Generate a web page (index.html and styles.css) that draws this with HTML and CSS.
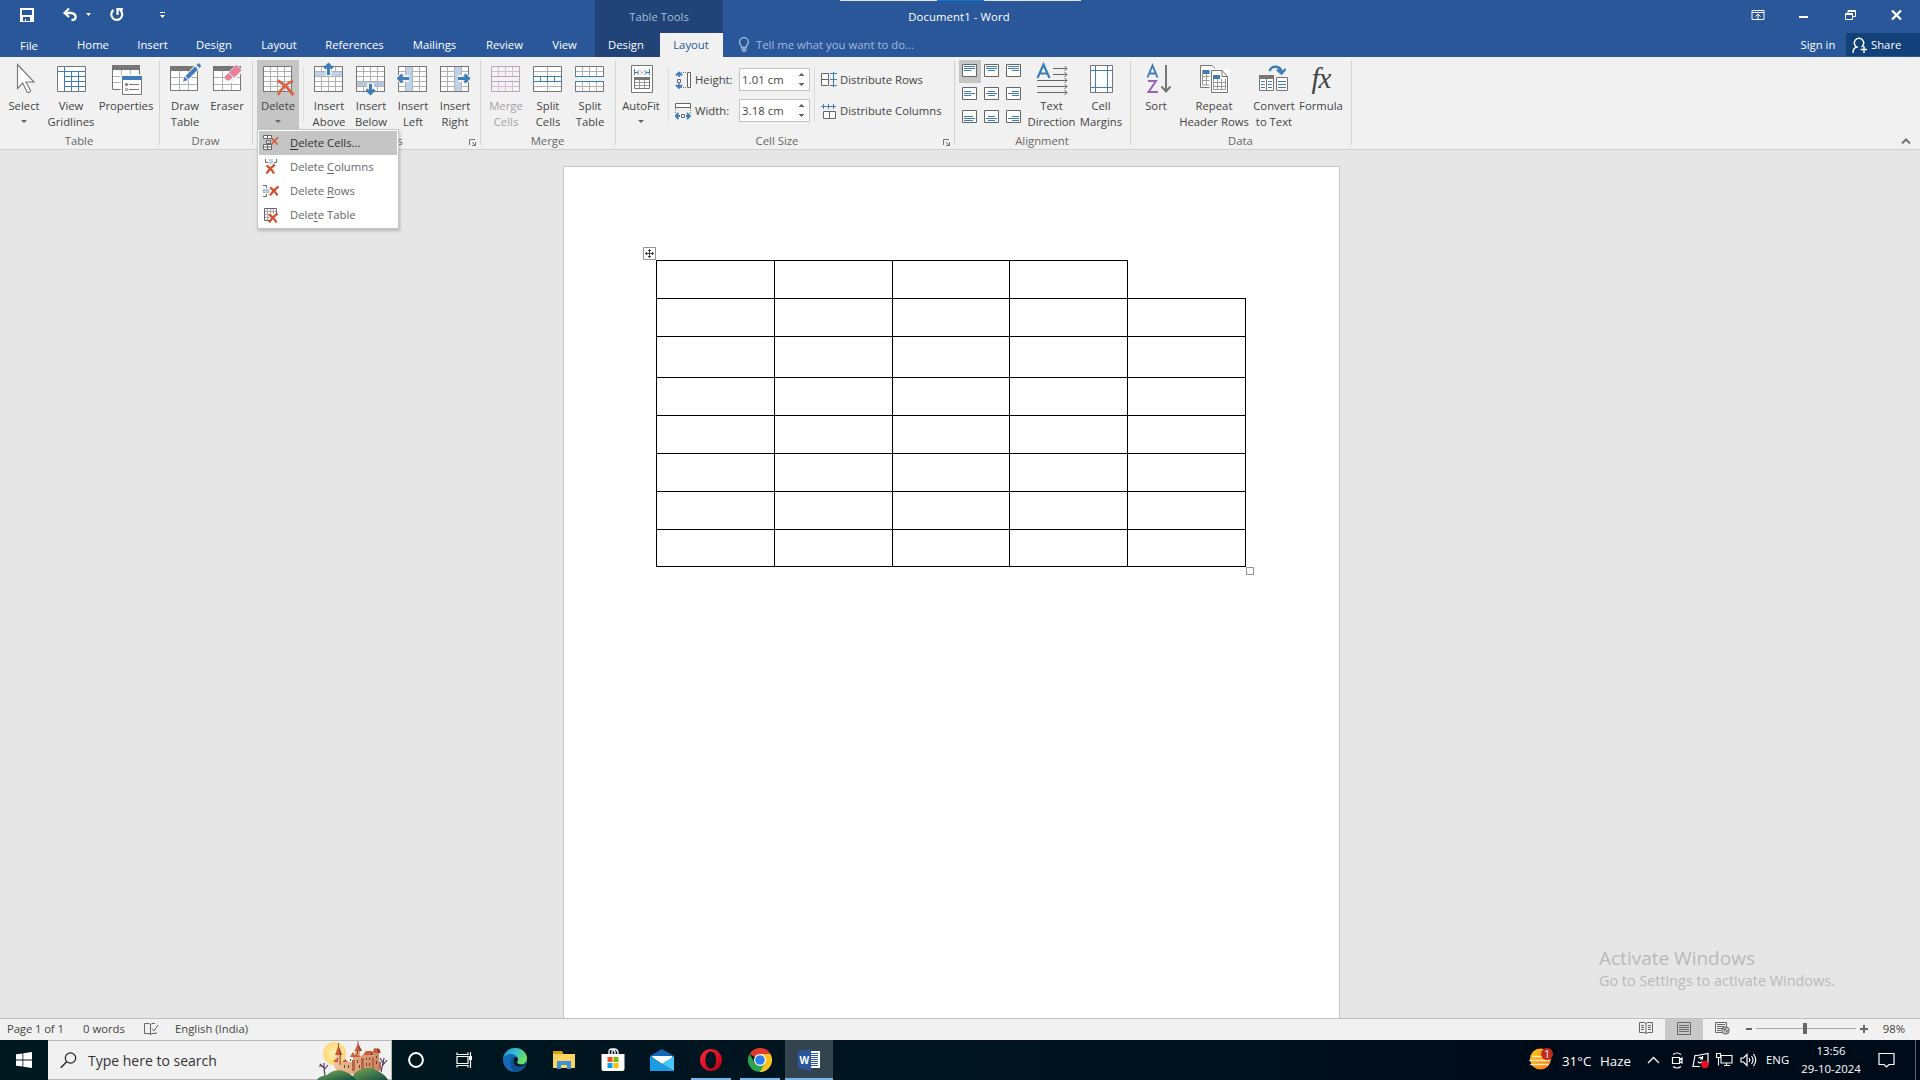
FILE: index.html
```html
<!DOCTYPE html>
<html lang="en">
<head>
<meta charset="utf-8">
<title>Document1 - Word</title>
<link rel="stylesheet" href="styles.css">
</head>
<body>
<svg class="defs" width="0" height="0">
  <defs>
    <g id="grid"><path fill="#fff" stroke="#767676" d="M1.5 4.5h28v25h-28z"/><path fill="none" stroke="#b1b1b1" d="M2 9.500h27M2 14.500h27M2 19.500h27M2 24.500h27M8.500 5v24M15.500 5v24M22.500 5v24"/></g>
    <g id="gridframe"><path fill="none" stroke="#767676" d="M1.500 4.500h28v25h-28z"/></g>
    <g id="head"><path fill="#fff" stroke="#767676" d="M1.500 4.500h27v24h-27z"/><path fill="none" stroke="#b1b1b1" d="M2 15.500h26M2 22.500h26M10.500 9v19M19.500 9v19"/><path fill="#767676" d="M1 4h28v5H1z"/></g>
    <g id="cross"><path fill="none" stroke="#d35230" stroke-width="2.200" d="M.5 1.500Q5 4 8 9.500M9 .5Q4 4 .5 9.500"/></g>
  </defs>
</svg>
<div class="app">
  <header class="titlebar">
    <div class="edge-strip"><i></i><b></b><i></i></div>
    <div class="quick">
      <svg width="180" height="33" viewBox="0 0 180 33"><path fill="#fff" fill-rule="evenodd" d="M20 8h14v14H20zM22 10v5h10v-5zM23 17v4h2v-2h1v2h4v-4z"/><path fill="none" stroke="#fff" stroke-width="2.300" d="M65 13h6.500c5.500 1 5.500 7 0 7"/><path fill="none" stroke="#fff" stroke-width="2.200" d="M69 8.500L64.500 13l4.500 4"/><path fill="#fff" d="M86 13h5l-2.500 3zM160 12h5v1h-5zM160 15h5l-2.500 3z"/><path fill="none" stroke="#fff" stroke-width="2.200" d="M113.500 10a5.500 5.500 0 1 0 6.500 0M117.500 15V9.200h5.500"/></svg>
    </div>
    <div class="context-title">Table Tools</div>
    <div class="doc-title">Document1 - Word</div>
    <div class="window-buttons">
      <span><svg width="14" height="12" viewBox="0 0 14 12"><path fill="none" stroke="#fff" d="M1 1.500h12v9H1zM1 3.500h12M7 10V5M4.500 7.500L7 5l2.500 2.500"/></svg></span>
      <span><svg width="10" height="12" viewBox="0 0 10 12"><path fill="#fff" d="M0 7h9v2H0z"/></svg></span>
      <span><svg width="11" height="12" viewBox="0 0 11 12"><path fill="none" stroke="#fff" d="M.5 4.500h7v6h-7zM.5 5.500h7M3 4V1.500h7.500v6H8M3 2.500h7"/></svg></span>
      <span><svg width="11" height="12" viewBox="0 0 11 12"><path fill="none" stroke="#fff" stroke-width="2.300" d="M1 1.500l9 9M10 1.500l-9 9"/></svg></span>
    </div>
  </header>
  <nav class="tabs">
    <span class="t-file">File</span><span class="t-home">Home</span><span class="t-insert">Insert</span><span class="t-design">Design</span><span class="t-layout">Layout</span><span class="t-ref">References</span><span class="t-mail">Mailings</span><span class="t-review">Review</span><span class="t-view">View</span><span class="t-ctx">Design</span><span class="t-active">Layout</span>
    <div class="tell"><svg width="12" height="16" viewBox="0 0 12 16"><path fill="none" stroke="#a3b9dc" stroke-width="1.400" d="M3.700 10.500C3.700 8.500 1.500 7.500 1.500 5a4.300 4.300 0 0 1 8.800 0c0 2.500-2.200 3.500-2.200 5.500z"/><path fill="#a3b9dc" d="M3.500 11.500h5v2h-5zM4.500 14h3v1h-3z"/></svg>Tell me what you want to do...</div>
    <span class="signin">Sign in</span>
    <div class="share"><svg width="16" height="18" viewBox="0 0 16 18"><path fill="none" stroke="#fff" stroke-width="1.400" d="M4.500 11a4.700 4.700 0 1 1 5 0M1 17c0-4 2-6 5-6M12 10v7M8.500 13.500H15"/></svg>Share</div>
  </nav>

  <section class="ribbon">
    <div class="group g-table">
      <div class="tools">
        <div class="btn w44"><svg width="32" height="36" viewBox="0 0 32 36"><path fill="#fff" stroke="#767676" stroke-width="1.100" d="M9.500 2.500v24l5.200-5.500 4.300 9c1.500 1.300 4-.2 3.500-1.500L18 20h8z"/></svg><span>Select</span><i class="caret"></i></div>
        <div class="btn w50"><svg width="32" height="36" viewBox="0 0 32 36"><path fill="#fff" d="M2 4h29v26H2z"/><path fill="none" stroke="#3f7db8" d="M9.500 5v24M3 9.500h27M16.500 10v19M23.500 10v19M10 14.500h20M10 19.500h20M10 24.500h20"/><path fill="none" stroke="#767676" d="M2.500 4.500h28v25h-28z"/></svg><span>View<br>Gridlines</span></div>
        <div class="btn w60"><svg width="32" height="36" viewBox="0 0 32 36"><path fill="#fff" stroke="#767676" d="M2.500 4.500h27v23h-27z"/><path fill="none" stroke="#b1b1b1" d="M3 14.500h26M3 20.500h10M11.500 8v6M20.500 8v6"/><path fill="#767676" d="M2 3h28v5H2z"/><path fill="#fff" stroke="#f1f1f1" d="M11 13h21v21H11z"/><path fill="#fff" stroke="#767676" d="M12.500 14.500h19v18h-19z"/><path fill="#3f7db8" d="M12 14h20v4H12z"/><path fill="none" stroke="#767676" d="M19 22.500h10M19 27.500h10"/><circle cx="16.500" cy="22.500" r="1.500" fill="#767676"/><circle cx="16.500" cy="27.500" r="1.100" fill="none" stroke="#767676"/></svg><span>Properties</span></div>
      </div>
      <div class="cap">Table</div>
    </div>
    <i class="vsep"></i>
    <div class="group g-draw">
      <div class="tools">
        <div class="btn w42"><svg width="32" height="36" viewBox="0 0 32 36"><use href="#head"/><path stroke="#f1f1f1" stroke-width="6" d="M16 18L30 3"/><path stroke="#3f7db8" stroke-width="4" d="M18 15.500L27.500 6M29 4.500l2-2"/><path fill="#3f7db8" d="M14 19.500l1.500-5 3.500 3.500z"/></svg><span>Draw<br>Table</span></div>
        <div class="btn w42"><svg width="32" height="36" viewBox="0 0 32 36"><use href="#head" x="1"/><path stroke="#f1f1f1" stroke-width="10" d="M17 17.500L29 5.500"/><path stroke="#e8829a" stroke-width="7.500" d="M20.500 13L28 5.500"/><path fill="#e8829a" d="M14 14l4-3 4 4-4 3.500h-2l-2-2z"/><path stroke="#fff" d="M17.500 10.500l5 5"/></svg><span>Eraser</span></div>
      </div>
      <div class="cap">Draw</div>
    </div>
    <i class="vsep"></i>
    <div class="group g-rows">
      <div class="tools">
        <div class="btn w42 pressed"><svg width="34" height="36" viewBox="0 0 34 36"><use href="#grid" x="1"/><path fill="none" stroke="#dc6140" stroke-width="3" d="M16.500 18.500Q25 23 32.500 33"/><path fill="none" stroke="#dc6140" stroke-width="2.600" d="M32 19Q22 23 17 33"/></svg><span>Delete</span><i class="caret"></i></div>
        <i class="tsep s1"></i>
        <div class="btn w42"><svg width="32" height="36" viewBox="0 0 32 36"><use href="#grid"/><path fill="#bdd2e8" d="M2 10h27v4H2z"/><use href="#gridframe"/><path stroke="#f1f1f1" stroke-width="6" d="M15.500 14V2"/><path fill="none" stroke="#3f7db8" stroke-width="3" d="M15.500 13V3M11.500 6.500l4-4 4 4"/></svg><span>Insert<br>Above</span></div>
        <div class="btn w42"><svg width="32" height="36" viewBox="0 0 32 36"><use href="#grid"/><path fill="#b7c7d8" d="M2 20h27v4H2z"/><use href="#gridframe"/><path stroke="#f1f1f1" stroke-width="7" d="M15.500 21v13"/><path fill="none" stroke="#3f7db8" stroke-width="3" d="M15.500 22v10M11.500 27.500l4 4 4-4"/></svg><span>Insert<br>Below</span></div>
        <div class="btn w42"><svg width="32" height="36" viewBox="0 0 32 36"><use href="#grid"/><path fill="#bdd2e8" d="M9 5h6v24H9z"/><use href="#gridframe"/><path stroke="#f1f1f1" stroke-width="7" d="M0 16.500h12"/><path fill="none" stroke="#3f7db8" stroke-width="3" d="M2 16.500h10M5.500 12.500l-4 4 4 4"/></svg><span>Insert<br>Left</span></div>
        <div class="btn w42"><svg width="32" height="36" viewBox="0 0 32 36"><use href="#grid"/><path fill="#bdd2e8" d="M16 5h6v24h-6z"/><use href="#gridframe"/><path stroke="#f1f1f1" stroke-width="7" d="M19 16.500h13"/><path fill="none" stroke="#3f7db8" stroke-width="3" d="M19 16.500h10M25.500 12.500l4 4-4 4"/></svg><span>Insert<br>Right</span></div>
      </div>
      <div class="cap">Rows &amp; Columns</div>
      <svg class="launch" width="8" height="8" viewBox="0 0 8 8"><path fill="none" stroke="#767676" d="M.5 6V.5H6M3 3l3.500 3.500M6.500 3v3.500H3"/></svg>
      <div class="menu">
        <div class="item on"><svg width="18" height="18" viewBox="0 0 18 18"><path fill="#fff" stroke="#666" d="M1.500 1.500h8v3h-8zM5.500 1.500v3M1.500 10.500h8v5h-8zM5.500 10.500v5M1.500 13h8"/><path fill="#cfdcf0" stroke="#666" d="M4.500 6.500h4v3h-4z"/><use href="#cross" transform="translate(9 3) scale(.8)" opacity=".9"/></svg><span><u>D</u>elete Cells...</span></div>
        <div class="item"><svg width="18" height="18" viewBox="0 0 18 18"><path fill="#bdd2e8" d="M7 1h4v5H7z"/><path fill="none" stroke="#666" d="M3.500 1v3.500H6M14.500 1v3.500H12"/><use href="#cross" x="4" y="6"/></svg><span>Delete <u>C</u>olumns</span></div>
        <div class="item"><svg width="18" height="18" viewBox="0 0 18 18"><path fill="#bdd2e8" stroke="#8aa" stroke-width=".6" d="M1 7.500h6v3H1z"/><path fill="none" stroke="#666" d="M1 3.500h3.500V6M1 14.500h3.500V12"/><use href="#cross" x="7.500" y="4"/></svg><span>Delete <u>R</u>ows</span></div>
        <div class="item"><svg width="18" height="18" viewBox="0 0 18 18"><path fill="#fff" stroke="#666" d="M2.500 2.500h12v12h-12z"/><path fill="none" stroke="#aaa" d="M3 5.500h11M3 8.500h11M3 11.500h11M5.500 3v11M8.500 3v11M11.500 3v11"/><path fill="#fff" d="M8 8h9v9H8z"/><use href="#cross" x="6.500" y="7"/></svg><span>Dele<u>t</u>e Table</span></div>
      </div>
    </div>
    <i class="vsep"></i>
    <div class="group g-merge">
      <div class="tools">
        <div class="btn w42 off"><svg width="32" height="36" viewBox="0 0 32 36"><path fill="#f7f0f7" stroke="#b1abb1" d="M1.500 4.500h28v25h-28z"/><path fill="none" stroke="#ccc5cc" d="M2 9.500h27M2 24.500h27M8.500 5v9M15.500 5v9M22.500 5v9M8.500 20v9M15.500 20v9M22.500 20v9"/><path stroke="#b1abb1" d="M2 14.500h27M2 19.500h27"/></svg><span>Merge<br>Cells</span></div>
        <div class="btn w42"><svg width="32" height="36" viewBox="0 0 32 36"><path fill="#fff" d="M1 4h29v26H1z"/><path stroke="#b1b1b1" d="M2 9.500h27M2 24.500h27M15.500 5v9M15.500 20v9"/><use href="#gridframe"/><path fill="none" stroke="#3f7db8" d="M1 14.500h29M1 19.500h29M1.500 15v4M8.500 15v4M15.500 15v4M22.500 15v4M29.500 15v4"/></svg><span>Split<br>Cells</span></div>
        <div class="btn w42"><svg width="32" height="36" viewBox="0 0 32 36"><path fill="#fff" stroke="#767676" d="M1.500 14V4.500h28V14M1.500 20v9.500h28V20"/><path stroke="#b1b1b1" d="M2 9.500h27M2 24.500h27M8.500 5v9M15.500 5v9M22.500 5v9M8.500 20v9M15.500 20v9M22.500 20v9"/><path stroke="#3f7db8" d="M1 14.500h29M1 19.500h29"/></svg><span>Split<br>Table</span></div>
      </div>
      <div class="cap">Merge</div>
    </div>
    <i class="vsep"></i>
    <div class="group g-size">
      <div class="tools">
        <div class="btn w42"><svg width="32" height="36" viewBox="0 0 32 36"><path fill="#fff" stroke="#767676" d="M6.500 3.500h21v27h-21z"/><path stroke="#767676" fill="none" d="M9.500 17.500h15v9h-15z"/><path fill="#767676" d="M9 15h16v3H9z"/><path stroke="#999" d="M10 20.500h14M10 23.500h14M14.500 18v8M19.500 18v8"/><path stroke="#3f7db8" fill="none" d="M9.500 7v6M24.500 7v6M10 10.500h3M21 10.500h3M13 8.500v4M21 8.500v4"/><path stroke="#999" stroke-dasharray="2 1" d="M14.500 8l5 5M19.500 8l-5 5"/></svg><span>AutoFit</span><i class="caret"></i></div>
        <i class="tsep s2"></i>
        <div class="fields">
          <div class="field"><svg width="17" height="18" viewBox="0 0 17 18"><path fill="#fff" stroke="#666" d="M12.500 1.500h3v15h-3zM2.500 8.500h3v3h-3z"/><path fill="none" stroke="#777" stroke-dasharray="1 1" d="M6 1.500h6M6 16.500h6"/><path fill="none" stroke="#3f7db8" stroke-width="1.800" d="M4 6V2M1 4.500l3-3 3 3M4 12.500v4M1 14l3 3 3-3"/></svg><label>Height:</label><div class="num">1.01 cm<em></em></div></div>
          <div class="field"><svg width="17" height="18" viewBox="0 0 17 18"><path fill="#fff" stroke="#666" d="M.5 1.500h15v4H.5zM6.500 12.500h3v3h-3z"/><path fill="none" stroke="#777" stroke-dasharray="1 1" d="M.5 6v6M15.500 6v6"/><path fill="none" stroke="#3f7db8" stroke-width="1.800" d="M5 14H1M3.500 11l-3 3 3 3M11 14h4M12 11l3 3-3 3"/></svg><label>Width:</label><div class="num">3.18 cm<em></em></div></div>
        </div>
        <i class="tsep s3"></i>
        <div class="dist">
          <div><svg width="17" height="18" viewBox="0 0 17 18"><path fill="#fff" stroke="#666" d="M.5 2.500h7v12h-7zM.5 8.500h7"/><path fill="none" stroke="#3f7db8" d="M9 2.500h7M9 8.500h7M9 14.500h7M12.500 1v15"/></svg>Distribute Rows</div>
          <div><svg width="17" height="18" viewBox="0 0 17 18"><path fill="#fff" stroke="#666" d="M2.500 9.500h12v7h-12zM8.500 9.500v7"/><path fill="none" stroke="#3f7db8" d="M0 4.500h15M2.500 2v5M7.500 2v5M12.500 2v5"/></svg>Distribute Columns</div>
        </div>
      </div>
      <div class="cap">Cell Size</div>
      <svg class="launch end" width="8" height="8" viewBox="0 0 8 8"><path fill="none" stroke="#767676" d="M.5 6V.5H6M3 3l3.500 3.500M6.500 3v3.500H3"/></svg>
    </div>
    <i class="vsep"></i>
    <div class="group g-align">
      <div class="tools">
        <div class="aligns">
          <span class="sel"><svg width="15" height="13" viewBox="0 0 15 13"><path fill="#fff" stroke="#666" d="M.5.5h14v12H.5z"/><path stroke="#3f7db8" d="M2 2.500h11M2 4.500h11M2 6.500h7"/></svg></span>
          <span><svg width="15" height="13" viewBox="0 0 15 13"><path fill="#fff" stroke="#666" d="M.5.5h14v12H.5z"/><path stroke="#3f7db8" d="M2 2.500h11M2 4.500h11M4 6.500h7"/></svg></span>
          <span><svg width="15" height="13" viewBox="0 0 15 13"><path fill="#fff" stroke="#666" d="M.5.5h14v12H.5z"/><path stroke="#3f7db8" d="M2 2.500h11M2 4.500h11M6 6.500h7"/></svg></span>
          <span><svg width="15" height="13" viewBox="0 0 15 13"><path fill="#fff" stroke="#666" d="M.5.5h14v12H.5z"/><path stroke="#3f7db8" d="M2 4.500h7M2 6.500h11M2 8.500h7"/></svg></span>
          <span><svg width="15" height="13" viewBox="0 0 15 13"><path fill="#fff" stroke="#666" d="M.5.5h14v12H.5z"/><path stroke="#3f7db8" d="M4 4.500h7M2 6.500h11M4 8.500h7"/></svg></span>
          <span><svg width="15" height="13" viewBox="0 0 15 13"><path fill="#fff" stroke="#666" d="M.5.5h14v12H.5z"/><path stroke="#3f7db8" d="M6 4.500h7M2 6.500h11M6 8.500h7"/></svg></span>
          <span><svg width="15" height="13" viewBox="0 0 15 13"><path fill="#fff" stroke="#666" d="M.5.5h14v12H.5z"/><path stroke="#3f7db8" d="M2 6.500h9M2 8.500h11M2 10.500h9"/></svg></span>
          <span><svg width="15" height="13" viewBox="0 0 15 13"><path fill="#fff" stroke="#666" d="M.5.5h14v12H.5z"/><path stroke="#3f7db8" d="M4 6.500h7M2 8.500h11M4 10.500h7"/></svg></span>
          <span><svg width="15" height="13" viewBox="0 0 15 13"><path fill="#fff" stroke="#666" d="M.5.5h14v12H.5z"/><path stroke="#3f7db8" d="M6 6.500h7M2 8.500h11M6 10.500h7"/></svg></span>
        </div>
        <div class="btn w50"><svg width="32" height="36" viewBox="0 0 32 36"><path fill="none" stroke="#3f7db8" stroke-width="2.200" d="M1.500 16L7.500 2.500 13.500 16M4 11.500h7"/><path fill="none" stroke="#666" d="M17 6.500h14M17 12.500h14M1 18.500h30M1 24.500h30M1 30.500h30M28.500 4l2.500 2.500L28.500 9M28.500 10l2.500 2.500-2.500 2.500M28.500 16l2.500 2.500-2.500 2.500M28.500 22l2.500 2.500-2.500 2.500M28.500 28l2.500 2.500-2.500 2.500"/></svg><span>Text<br>Direction</span></div>
        <div class="btn w50"><svg width="32" height="36" viewBox="0 0 32 36"><path fill="#fff" stroke="#767676" d="M5.500 3.500h22v27h-22z"/><path stroke="#3f7db8" d="M6 8.500h21M6 25.500h21M10.500 4v26M22.500 4v26"/></svg><span>Cell<br>Margins</span></div>
      </div>
      <div class="cap">Alignment</div>
    </div>
    <i class="vsep"></i>
    <div class="group g-data">
      <div class="tools">
        <div class="btn w42"><svg width="32" height="36" viewBox="0 0 32 36"><path fill="none" stroke="#3f7db8" stroke-width="1.900" d="M7.500 15.500L12.500 3.500 17.500 15.500M9 11.500h7"/><path fill="none" stroke="#9b64b8" stroke-width="2" d="M8 19h8L8.500 30H18"/><path fill="none" stroke="#767676" stroke-width="2" d="M26 3v26M21.500 24.500l4.500 5 4.500-5"/></svg><span>Sort</span></div>
        <div class="btn w74"><svg width="32" height="36" viewBox="0 0 32 36"><path fill="#fff" stroke="#767676" d="M2.500 3.500H14l5 5v17H2.500z"/><path fill="#3f7db8" d="M4 8h9v4H4z"/><path fill="none" stroke="#999" d="M4.500 8v15H14M4.500 14.500h9M4.500 18.500h9M8.500 12v11"/><path fill="#fff" stroke="#f1f1f1" d="M12 7h20v25H12z"/><path fill="#fff" stroke="#767676" d="M13.500 8.500H24l5.500 6v16h-16zM24 8.500v6h5.500"/><path fill="#3f7db8" d="M15 13h7v4h-7z"/><path fill="none" stroke="#999" d="M15.500 17v10.500h12V17M15.500 20.500h12M15.500 24.500h12M19.500 17v10M23.500 17v10"/></svg><span>Repeat<br>Header Rows</span></div>
        <div class="btn w46"><svg width="32" height="36" viewBox="0 0 32 36"><path fill="none" stroke="#3f7db8" stroke-width="2.400" d="M11.500 9c2-6 12-6 12 2M19 7.500l4.500 4 4-4.500"/><path fill="#fff" stroke="#767676" d="M1.500 13.500h14v15h-14zM18.500 15.500h11v13h-11zM8.500 16v12"/><path fill="#767676" d="M1 13h15v4H1z"/><path stroke="#3f7db8" d="M3 19.500h4M3 22.500h4M3 25.500h4M10 19.500h4M10 22.500h4M10 25.500h4M20 19.500h8M20 22.500h8M20 25.500h8"/></svg><span>Convert<br>to Text</span></div>
        <div class="btn w48"><div class="fx">fx</div><span>Formula</span></div>
      </div>
      <div class="cap">Data</div>
    </div>
    <i class="vsep"></i>
    <svg class="collapse" width="10" height="7" viewBox="0 0 10 7"><path fill="none" stroke="#767676" stroke-width="2" d="M1 5.500l4-4 4 4"/></svg>
  </section>

  <main class="canvas">
    <div class="page">
      <svg class="mover" width="13" height="13" viewBox="0 0 13 13"><path fill="#fff" stroke="#949494" d="M.5.5h12v12H.5z"/><path fill="none" stroke="#444" d="M2 6.500h9M6.500 2v9M5 3.500h3M5 9.500h3M3.500 5v3M9.500 5v3"/></svg>
      <div class="table">
        <i></i><i></i><i></i><i></i><i class="gone"></i>
        <i></i><i></i><i></i><i></i><i></i>
        <i></i><i></i><i></i><i></i><i></i>
        <i></i><i></i><i></i><i></i><i></i>
        <i></i><i></i><i></i><i></i><i></i>
        <i></i><i></i><i></i><i></i><i></i>
        <i></i><i></i><i></i><i></i><i></i>
        <i></i><i></i><i></i><i></i><i></i>
      </div>
      <b class="sizer"></b>
    </div>
    <div class="watermark"><p class="wm-title">Activate Windows</p><p class="wm-text">Go to Settings to activate Windows.</p></div>
  </main>

  <footer class="status">
    <span class="st-page">Page 1 of 1</span><span class="st-words">0 words</span>
    <svg class="st-proof" width="16" height="14" viewBox="0 0 16 14"><path fill="none" stroke="#666" d="M7.500 12.500L6 11.500H1.500v-10H6l1.500 1 1.500-1h3M7.500 2.500V13M7.500 12.500l1.500-1h4V10M9 6.500l2 2.500 4-6"/></svg>
    <span class="st-lang">English (India)</span>
    <div class="views">
      <svg width="14" height="14" viewBox="0 0 14 14"><path fill="none" stroke="#666" d="M7 2.500L5.500 1.500h-5v10h5L7 12.500l1.500-1h5v-10h-5zM7 2v11M2 4.500h3M2 6.500h3M2 8.500h3M9 4.500h3M9 6.500h3M9 8.500h3"/></svg>
      <span class="print"><svg width="14" height="13" viewBox="0 0 14 13"><path fill="none" stroke="#666" d="M.5.500h13v12H.5zM2 3.500h10M2 5.500h10M2 7.500h10M2 9.500h10"/></svg></span>
      <svg width="15" height="14" viewBox="0 0 15 14"><path fill="none" stroke="#666" d="M7 11.500H.5V1.500h11V6M2 3.500h8M2 5.500h7M2 7.500h5M2 9.500h4"/><circle cx="10.500" cy="9.500" r="3.700" fill="#bbb" stroke="#666"/><path fill="#666" d="M8 8l3-1-1 3zM11 10l2-1-1 3z"/></svg>
    </div>
    <svg class="zoomer" width="124" height="21" viewBox="0 0 124 21"><path fill="#666" d="M1 9h6v2H1zM58 4h4v11h-4zM115 9h8v2h-8zM118 6h2v8h-2z"/><path stroke="#a6a6a6" d="M11 9.500h47M62 9.500h49"/></svg>
    <span>98%</span>
  </footer>

  <footer class="taskbar">
    <div class="start"><svg width="16" height="16" viewBox="0 0 16 16"><path fill="#fff" d="M0 2.300L6.500 1.400v6.200H0zM7.300 1.300L16 0v7.600H7.300zM0 8.400h6.500v6.200L0 13.700zM7.300 8.400H16V16l-8.700-1.300z"/></svg></div>
    <div class="search">
      <svg width="17" height="17" viewBox="0 0 17 17"><circle cx="10.500" cy="6" r="5.200" fill="none" stroke="#222" stroke-width="1.200"/><path stroke="#222" stroke-width="1.300" d="M6.700 9.800L.7 15.800"/></svg>
      <span>Type here to search</span>
      <svg class="castle" width="72" height="39" viewBox="0 0 72 39">
        <defs><linearGradient id="hill" x2="1" y2="1"><stop stop-color="#7fa64f"/><stop offset=".45" stop-color="#4c8450"/><stop offset="1" stop-color="#154a3e"/></linearGradient><radialGradient id="sun"><stop stop-color="#fff1b5"/><stop offset="1" stop-color="#ffd978"/></radialGradient><linearGradient id="wall" x2="1"><stop stop-color="#f0c49a"/><stop offset="1" stop-color="#c98663"/></linearGradient></defs>
        <circle cx="17.500" cy="12.500" r="11.500" fill="url(#sun)"/>
        <path fill="url(#wall)" d="M19 14h5v7l4-2 4 2h4v-7h2V9h5v6l5-2h5l4 2V11h5v9l2 1v8l-8 4H28l-8-3-3-5z"/>
        <path fill="#b7644a" d="M35 19h3v11h-3zM44 17h3v11h-3zM55 17h2v12h-2zM22.500 14H24v10h-1.500zM62 21h2v7h-2z"/>
        <path fill="#cf5a36" d="M18 14l3.500-9.500L25 14zM37.500 10L41 2.500 45 10zM46 14l3-4h5l3 4zM55 12l2.500-5 5 1 1 4zM33 16l3-5 2.500 5zM16 21l3-3 3 3zM25 21l3-3 3 3zM35.500 16l4-3 4 3z"/>
        <path fill="#8f3f38" d="M41 2.500L45 10h-2.500zM21.500 4.500L25 14h-2zM60 7.500l2.500.500 1 4H61zM53 10h1l3 4h-2z"/>
        <path stroke="#8f3f38" stroke-width=".8" d="M41 0v4M21.500 2v4"/>
        <path fill="#713936" d="M20 17h1v2h-1zM27 24h1v3h-1zM31 24h1v3h-1zM40 10h1v3h-1zM40 19h1v3h-1zM42 24h1v3h-1zM49 17h1v2h-1zM52 17h1v2h-1zM49 22h1v3h-1zM52 22h1v3h-1zM59 15h1v2h-1zM59 20h1v3h-1zM33 18h1v2h-1z"/>
        <path fill="none" stroke="#4c3c6a" stroke-width="1.200" d="M8 35l-1-8-4-4M7 29l4-5M5 25H2M7 27v-5M64 31l2-9-3-5M66 24l4-5M66 22l1-5"/>
        <path fill="url(#hill)" d="M34 39c2-9 14-15 23-11 7 3 12 7 14 11z"/>
        <path fill="url(#hill)" d="M0 39c2-4 6-4 10-5 5-5 13-6 19-3 5 2 8 5 10 8z"/>
      </svg>
    </div>
    <div class="cell48"><svg width="18" height="18" viewBox="0 0 18 18"><circle cx="9" cy="9" r="6.900" fill="none" stroke="#fff" stroke-width="2"/></svg></div>
    <div class="cell48"><svg width="17" height="17" viewBox="0 0 17 17"><path fill="none" stroke="#fff" stroke-width="1.200" d="M1 4.500h11v7H1zM1 .5v2h11v-2M1 15.500v-2h11v2M14.500 0v16"/><path fill="#fff" d="M13 4h3v4h-3z"/></svg></div>
    <div class="apps">
      <div class="app-cell"><svg width="24" height="24" viewBox="0 0 24 24"><defs><linearGradient id="eg" x2="1" y2=".4"><stop stop-color="#2387d8"/><stop offset=".55" stop-color="#35bfd2"/><stop offset="1" stop-color="#6be05a"/></linearGradient></defs><circle cx="12" cy="12" r="12" fill="#1569b8"/><path fill="url(#eg)" d="M0 11C1 4 6 0 12 0c7 0 12 5 12 10 0 4-3 6.500-6 6.500-3 0-4-1.500-4-2 1-1 1-2 1-3C15 8 11 6 7.500 6 4 6 1 8 0 11z"/><path fill="#0e4f96" d="M7.500 15c0-4 2-6 5-6-5 4-3 10 3 10 3 0 6-1.500 7-2.500-2 4.500-6 7.500-10.500 7.500C9 23 7.500 19 7.500 15z"/><path fill="#001820" d="M12.500 9c2 0 2.700 1.500 2.500 3-.2 1.300-1 2-1 2.500 0 1 2 2.300 4.500 2 2 0 3.500-.7 4.500-1.500-1 4-12 6-12.500-1C10.300 11.500 11 9.500 12.500 9z"/></svg></div>
      <div class="app-cell"><svg width="22" height="20" viewBox="0 0 22 20"><path fill="#dfa000" d="M0 1h9l1 2v3H0z"/><path fill="#fcd462" d="M0 4h22v14H0z"/><path fill="#3c8fd8" d="M4 11h14v8h-4v-4H8v4H4z"/></svg></div>
      <div class="app-cell"><svg width="24" height="24" viewBox="0 0 24 24"><path fill="none" stroke="#fff" stroke-width="1.300" d="M8 6V4q0-3 2.500-3T14 4v2M11 6V4q0-3 2.500-3T17 4v2"/><path fill="#fff" d="M.5 6h23v15q0 2-2 2h-19q-2 0-2-2z"/><path fill="#f25022" d="M6.500 9h5v5h-5z"/><path fill="#7fba00" d="M12.500 9h5v5h-5z"/><path fill="#00a4ef" d="M6.500 15h5v5h-5z"/><path fill="#ffb900" d="M12.500 15h5v5h-5z"/></svg></div>
      <div class="app-cell"><svg width="24" height="24" viewBox="0 0 24 24"><path fill="#1068b8" d="M0 8l12-7 12 7v5H0z"/><path fill="#fff" d="M2 8h20v2l-10 6L2 9z"/><path fill="#1b9be4" d="M0 8l12 8 12 7H0z"/><path fill="#45c8f5" d="M24 8v15L12 16z"/></svg></div>
      <div class="app-cell open"><svg width="24" height="24" viewBox="0 0 24 24"><defs><linearGradient id="op" y2="1"><stop stop-color="#ff2338"/><stop offset="1" stop-color="#b40016"/></linearGradient></defs><path fill="url(#op)" fill-rule="evenodd" d="M12 1a11 11 0 1 0 0 22 11 11 0 1 0 0-22zm0 2.500c3.500 0 5 4 5 8.500s-1.500 8.500-5 8.500S6.500 16.500 6.500 12 8.500 3.500 12 3.500z"/></svg></div>
      <div class="app-cell open"><svg width="24" height="24" viewBox="0 0 24 24"><path fill="#e33b2e" d="M12 12L1.600 6A12 12 0 0 1 22.400 6z"/><path fill="#fcc31e" d="M12 12V6h10.400A12 12 0 0 1 12 24z"/><path fill="#2ba24c" d="M12 24A12 12 0 0 1 1.600 6l5.200 9L12 18l5.200-3z"/><circle cx="12" cy="12" r="6" fill="#fff"/><circle cx="12" cy="12" r="4.800" fill="#2f7de8"/></svg></div>
      <div class="app-cell active"><svg width="24" height="24" viewBox="0 0 24 24"><path fill="#fff" d="M12 3h11v17H12z"/><path stroke="#2b579a" d="M14 5.500h7M14 7.500h7M14 9.500h7M14 11.500h7M14 13.500h7M14 15.500h7M14 17.500h7"/><path fill="#2b579a" d="M1 3l13-2v22L1 20z"/><text x="2.500" y="16" class="w-mark">W</text></svg></div>
    </div>
    <div class="tray">
      <svg class="ic-weather" width="25" height="24" viewBox="0 0 25 24"><defs><linearGradient id="wx" y2="1"><stop stop-color="#ffca16"/><stop offset="1" stop-color="#f07818"/></linearGradient></defs><circle cx="11.500" cy="13" r="10.500" fill="url(#wx)"/><path stroke="#ffe7c6" stroke-width="1.600" stroke-linecap="round" d="M4 10.500h14M1 14.500h19M2 18.500h17"/><circle cx="18" cy="8" r="6" fill="#c42b1c"/><text x="18" y="11.500" class="badge">1</text></svg>
      <span class="temp">31°C</span><span class="haze">Haze</span>
      <svg class="ic-up" width="13" height="8" viewBox="0 0 13 8"><path fill="none" stroke="#fff" stroke-width="1.300" d="M1 7l5.500-5.500L12 7"/></svg>
      <svg class="ic-cam" width="12" height="17" viewBox="0 0 12 17"><path fill="none" stroke="#fff" stroke-width="1.200" d="M1.500 5.500h7v6h-7zM8.500 7.500l2.500-1.500v5l-2.500-1.500M2 2.500q4-3 8 0M2 14.500q4 3 8 0"/></svg>
      <svg class="ic-shot" width="17" height="17" viewBox="0 0 17 17"><path fill="none" stroke="#fff" stroke-width="1.200" d="M8 14.500H1l2-11h2l11-2v10M6.500 6c2-1 4-.5 4 1M10 9.500c-1 2-4 1.500-4 0M10.500 4v3H8"/><circle cx="13" cy="12.500" r="3.800" fill="#e81123"/></svg>
      <svg class="ic-net" width="17" height="14" viewBox="0 0 17 14"><path fill="none" stroke="#fff" stroke-width="1.100" d="M5 2.500h11v7.500H5zM8 12.500h6M10.500 10v2.500M.5.500h4v4h-4zM2.500 4.500v8"/></svg>
      <svg class="ic-vol" width="17" height="14" viewBox="0 0 17 14"><path fill="none" stroke="#fff" stroke-width="1.200" d="M1 5h2.500L7 1.500v11L3.500 9H1zM9 5q1.500 2 0 4M11.500 3q3 4 0 8M13.500 1q4.500 6 0 12"/></svg>
      <span class="lang">ENG</span>
      <div class="clock"><span>13:56</span><span>29-10-2024</span></div>
      <svg class="ic-note" width="17" height="17" viewBox="0 0 17 17"><path fill="none" stroke="#fff" stroke-width="1.200" d="M1 1.500h15v11h-5L8.500 15 6 12.500H1z"/></svg>
      <i class="peek"></i>
    </div>
  </footer>
</div>
</body>
</html>
```
FILE: styles.css
```css
* { box-sizing: border-box; }
body { margin: 0; overflow: hidden; font: 11.300px/16px "Open Sans", "Noto Sans", sans-serif; color: #444; }
svg { display: block; flex: none; }
.defs { position: absolute; }
i { font-style: normal; }
.app { width: 1920px; height: 1080px; display: flex; flex-direction: column; overflow: hidden; }

/* Title bar */
.titlebar { position: relative; display: flex; height: 33px; background: #2a579a; color: #fff; line-height: 33px; flex: none; }
.edge-strip { position: absolute; top: 0; left: 840px; display: flex; height: 1px; }
.edge-strip i { width: 97px; background: #e3e3df; }
.edge-strip b { width: 47px; background: #0078d7; }
.quick { width: 595px; }
.context-title { width: 128px; background: #224377; color: #a7bbdc; text-align: center; }
.doc-title { width: 472px; text-align: center; letter-spacing: .1px; }
.window-buttons { display: flex; margin-left: auto; margin-right: 1px; }
.window-buttons span { width: 46px; height: 30px; display: flex; align-items: center; justify-content: center; }

/* Ribbon tabs */
.tabs { display: flex; height: 24px; background: #2a579a; color: #fff; line-height: 24px; flex: none; }
.tabs > span { text-align: center; white-space: nowrap; }
.t-file { width: 58px; padding-top: 1px; }
.t-home { width: 70px; }
.t-insert { width: 49px; }
.t-design { width: 74px; }
.t-layout { width: 56px; }
.t-ref { width: 95px; }
.t-mail { width: 65px; }
.t-review { width: 75px; }
.t-view { width: 45px; margin-right: 8px; }
.t-ctx { width: 65px; background: #224377; padding-right: 3px; }
.t-active { width: 63px; background: #f1f1f1; color: #2a579a; padding-right: 1px; }
.tell { display: flex; align-items: center; gap: 6px; padding-left: 15px; color: #a3b9dc; letter-spacing: .02px; }
.signin { margin-left: auto; width: 48px; }
.share { display: flex; align-items: center; width: 74px; height: 23px; margin-left: 4px; padding-left: 6px; gap: 3px; background: #124078; }

/* Ribbon */
.ribbon { display: flex; height: 93px; background: #f1f1f1; border-bottom: 1px solid #d2d2d2; flex: none; }
.group { position: relative; display: flex; flex-wrap: wrap; align-content: flex-start; padding-top: 3px; }
.tools { display: flex; width: 100%; height: 72px; }
.cap { flex: 1; text-align: center; color: #666; line-height: 18px; padding-right: 1px; }
.launch { margin: 7px 3px 0 4px; }
.vsep { width: 1px; height: 84px; margin-top: 4px; background: #d2d2d2; flex: none; }
.tsep { width: 1px; height: 55px; margin-top: 7px; background: #dcdcdc; flex: none; }
.g-table { width: 159px; }
.g-table .tools { padding-left: 2px; }
.g-draw { width: 92px; }
.g-draw .tools { padding-left: 4px; }
.g-rows { width: 227px; }
.g-rows .tools { padding-left: 4px; }
.g-merge { width: 134px; }
.g-merge .tools { padding-left: 4px; }
.g-size { width: 338px; }
.g-size .tools { padding-left: 4px; }
.g-align { width: 175px; }
.g-align .tools { padding-left: 4px; }
.g-data { width: 220px; }
.g-data .tools { padding-left: 4px; }
.btn { display: flex; flex-direction: column; align-items: center; flex: none; height: 70px; padding-top: 2px; text-align: center; }
.btn > span { white-space: nowrap; line-height: 16px; }
.btn.pressed { background: #c5c5c5; }
.btn.off { color: #a6a0a6; }
.w42 { width: 42px; }
.w44 { width: 44px; }
.w46 { width: 46px; }
.w48 { width: 48px; }
.w50 { width: 50px; }
.w60 { width: 60px; }
.w74 { width: 74px; }
.caret { width: 0; margin-top: 6px; border: 3px solid transparent; border-top-color: #666; border-bottom: 0; }
.s1 { margin-left: 4px; margin-right: 4px; }
.s2 { margin-left: 6px; }
.s3 { margin-left: 4px; }
.fields { padding: 8px 0 0 6px; display: flex; flex-direction: column; gap: 8px; }
.field { display: flex; align-items: center; height: 23px; }
.field label { width: 47px; margin-left: 3px; }
.num { width: 71px; height: 23px; margin-left: -3px; padding-left: 2px; line-height: 21px; background: #fff; border: 1px solid #c3c3c3; display: flex; justify-content: space-between; letter-spacing: .1px; }
.num em { width: 5px; margin: 4px 5px 0 0; height: 13px; background: linear-gradient(#666, #666) 2px 0 / 1px 1px no-repeat, linear-gradient(#666, #666) 1px 1px / 3px 1px no-repeat, linear-gradient(#666, #666) 0 2px / 5px 1px no-repeat, linear-gradient(#666, #666) 0 10px / 5px 1px no-repeat, linear-gradient(#666, #666) 1px 11px / 3px 1px no-repeat, linear-gradient(#666, #666) 2px 12px / 1px 1px no-repeat; }
.dist { padding: 8px 0 0 6px; display: flex; flex-direction: column; gap: 8px; white-space: nowrap; }
.dist div { display: flex; align-items: center; gap: 2px; height: 23px; }
.aligns { display: grid; grid-template-columns: repeat(3, 22px); grid-auto-rows: 23px; width: 66px; flex: none; }
.aligns span { display: flex; padding: 4px 0 0 3px; }
.aligns .sel { background: #c5c5c5; }
.aligns + .btn { width: 49px; margin-left: 2px; }
.fx { width: 32px; height: 36px; font: italic 29px/32px "Liberation Serif", serif; letter-spacing: -1px; }
.collapse { margin: 81px 9px 0 auto; }

/* Drop-down menu */
.menu { position: absolute; left: 4px; top: 72px; z-index: 5; width: 142px; height: 100px; padding: 1px; background: #fff; border: 1px solid #c6c6c6; box-shadow: 1px 2px 3px rgba(0, 0, 0, .2); }
.item { display: flex; align-items: center; gap: 10px; height: 24px; padding-left: 3px; color: #666; white-space: nowrap; }
.item.on { background: #c5c5c5; color: #333; }
.item u { text-underline-offset: 2px; }

/* Document */
.canvas { position: relative; flex: 1; min-height: 0; background: #e6e6e6; overflow: hidden; padding: 16px 0 0 563px; }
.page { position: relative; width: 777px; height: 1000px; padding: 93px 0 0 92px; background: #fff; border: 1px solid #c6c6c6; }
.table { display: grid; grid-template-columns: 118px 118px 117px 118px 118px; grid-template-rows: 38px 38px 41px 38px 38px 38px 38px 37px; width: 590px; }
.table i { border: 1px solid #000; margin: 0 -1px -1px 0; }
.table .gone { visibility: hidden; }
.mover { position: absolute; left: 79px; top: 80px; }
.sizer { position: absolute; left: 682px; top: 400px; width: 8px; height: 8px; border: 1px solid #949494; background: #fff; }
.watermark { position: absolute; left: 1599px; top: 795px; color: #b9b9b9; white-space: nowrap; }
.watermark p { margin: 0; }
.wm-title { font-size: 19px; line-height: 26px; }
.wm-text { font-size: 14.400px; line-height: 20px; }

/* Status bar */
.status { display: flex; align-items: center; height: 22px; flex: none; background: #f1f1f1; border-top: 1px solid #c0c0c0; white-space: nowrap; padding-right: 15px; }
.status > span { padding-bottom: 1px; }
.st-page { width: 76px; margin-left: 7px; letter-spacing: -.1px; }
.st-words { width: 60px; }
.st-proof { margin: -2px 16px 0 0; }
.views { display: flex; align-items: center; margin-left: auto; }
.print { display: flex; justify-content: center; width: 38px; height: 21px; margin: 0 12px; padding-top: 3px; background: #c9c9c9; }
.views > svg { margin-top: -3px; }
.zoomer { margin: 0 14px 0 15px; }

/* Taskbar */
.taskbar { display: flex; height: 40px; flex: none; background: linear-gradient(90deg, #001820, #00141f 50%, #000b1a 80%); color: #fff; }
.start, .cell48 { display: flex; align-items: center; justify-content: center; width: 48px; }
.search { display: flex; align-items: center; width: 344px; background: #f1f1f1; border: 1px solid #b8b8b8; border-width: 1px 1px 1px 0; padding-left: 12px; color: #333; font-size: 14px; }
.search span { margin-left: 11px; padding-top: 1px; white-space: nowrap; }
.castle { margin: 0 2px 0 auto; }
.apps { display: flex; margin-left: 2px; }
.app-cell { display: flex; align-items: center; justify-content: center; width: 49px; }
.open { background: linear-gradient(#76b9ed, #76b9ed) 5px 38px / 40px 2px no-repeat; }
.active { width: 48px; margin-left: 1px; background: #33444f; border-bottom: 2px solid #76b9ed; padding-top: 2px; }
.w-mark { font: bold 10px "Open Sans", sans-serif; fill: #fff; }
.badge { font: 10px "Open Sans", sans-serif; fill: #fff; text-anchor: middle; }
.tray { display: flex; align-items: center; margin-left: auto; white-space: nowrap; font-size: 11.400px; }
.temp, .haze { font-size: 13.300px; padding-top: 2px; }
.temp { width: 38px; margin-left: 8px; }
.haze { width: 47px; }
.ic-weather { margin-top: -4px; }
.ic-cam { margin-left: 11px; }
.ic-shot { margin-left: 9px; }
.ic-net { margin-left: 7px; }
.ic-vol { margin-left: 7px; }
.lang { width: 33px; margin-left: 9px; }
.clock { display: flex; flex-direction: column; width: 64px; text-align: center; line-height: 18px; }
.ic-note { margin-left: 15px; }
.peek { width: 5px; height: 40px; margin-left: 20px; border-left: 1px solid #58616b; }
```
